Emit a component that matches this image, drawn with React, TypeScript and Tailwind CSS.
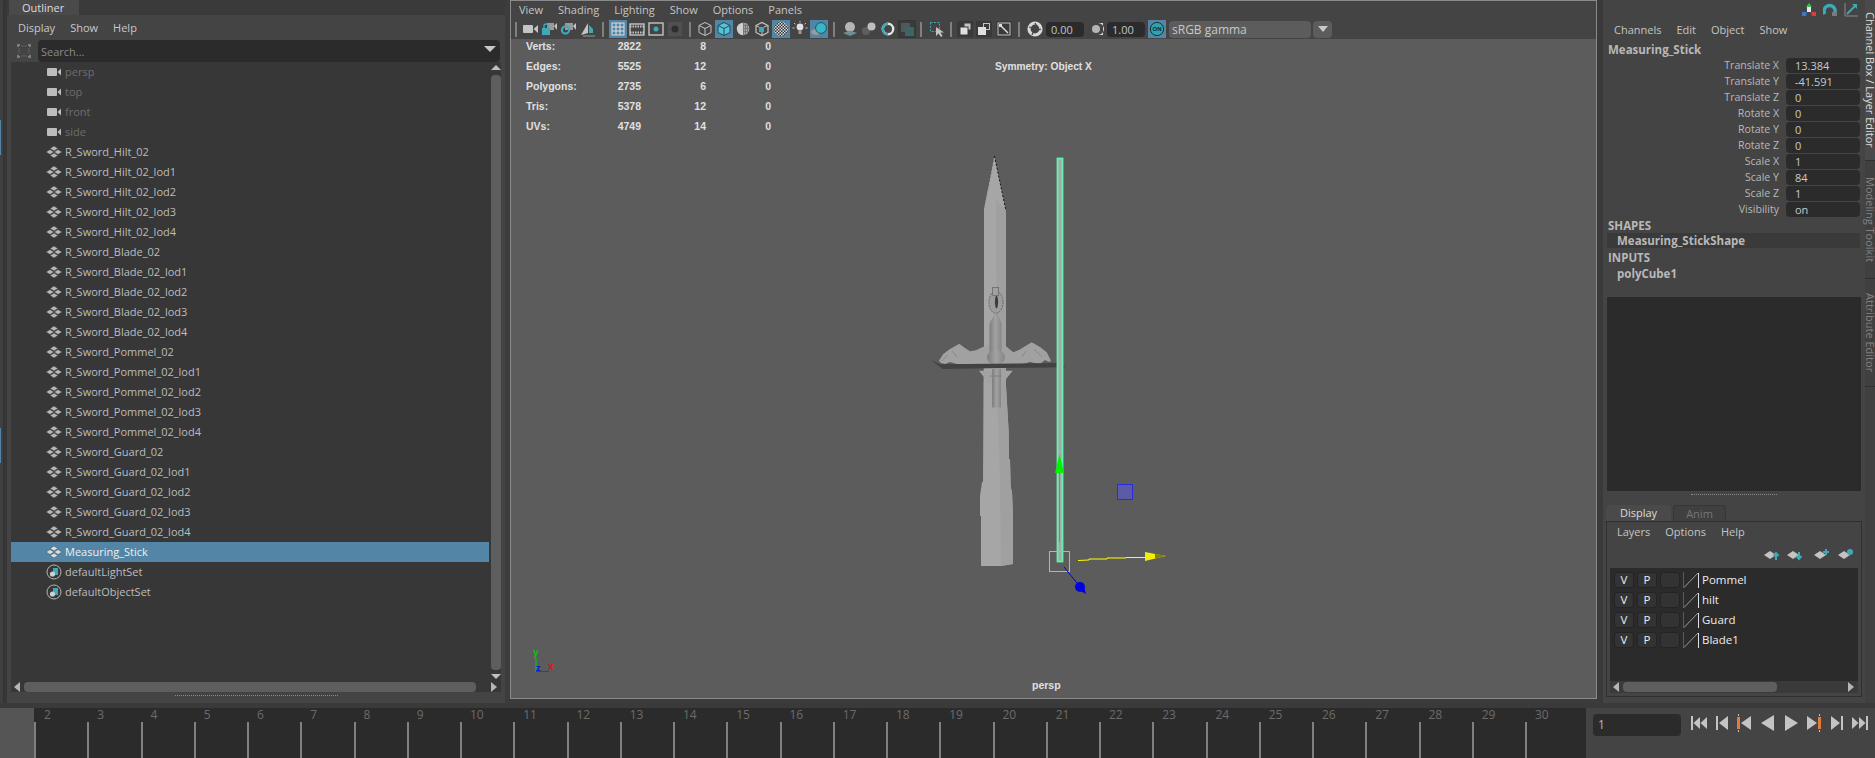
import type { ReactNode } from "react";

const G = "#c4c4c4";
const T = "#3fa9b8";

const outlinerRows = [
  ...["persp", "top", "front", "side"].map((name) => ({ name, kind: "cam" })),
  ...["Hilt", "Blade", "Pommel", "Guard"].flatMap((part) =>
    ["", "_lod1", "_lod2", "_lod3", "_lod4"].map((lod) => ({
      name: `R_Sword_${part}_02${lod}`,
      kind: "xform",
    }))
  ),
  { name: "Measuring_Stick", kind: "selected" },
  { name: "defaultLightSet", kind: "set" },
  { name: "defaultObjectSet", kind: "set" },
];

const channels = [
  ["Translate X", "13.384"],
  ["Translate Y", "-41.591"],
  ["Translate Z", "0"],
  ["Rotate X", "0"],
  ["Rotate Y", "0"],
  ["Rotate Z", "0"],
  ["Scale X", "1"],
  ["Scale Y", "84"],
  ["Scale Z", "1"],
  ["Visibility", "on"],
];

const hud = [
  ["Verts:", "2822", "8", "0"],
  ["Edges:", "5525", "12", "0"],
  ["Polygons:", "2735", "6", "0"],
  ["Tris:", "5378", "12", "0"],
  ["UVs:", "4749", "14", "0"],
];

const frames = Array.from({ length: 29 }, (_, i) => i + 2);

function Ico({ children, on }: { children?: ReactNode; on?: boolean }) {
  return (
    <div className={`w-[18px] h-[18px] flex-none ${on ? "bg-[#5285a6]" : ""}`}>
      <svg width="18" height="18" viewBox="0 0 18 18">
        {children}
      </svg>
    </div>
  );
}

function Sep({ className = "" }: { className?: string }) {
  return <div className={`w-[2px] h-[15px] flex-none bg-[#808080] ${className}`} />;
}

function CamIcon() {
  return (
    <svg width="16" height="12" viewBox="0 0 16 12" className="flex-none">
      <rect x="1" y="2" width="10" height="8" rx="1" fill="#bdbdbd" />
      <polygon points="11.5,6 15,2.5 15,9.5" fill="#bdbdbd" />
    </svg>
  );
}

function XformIcon({ bright }: { bright?: boolean }) {
  const c = bright ? "#dcdcdc" : "#b8b8b8";
  const line = bright ? "#2f4f66" : "#373737";
  return (
    <svg width="16" height="12" viewBox="0 0 16 12" className="flex-none">
      <g fill={c} stroke={line} strokeWidth="0.5">
        <polygon points="8,0 12,2.5 8,5 4,2.5" />
        <polygon points="8,7 12,9.5 8,12 4,9.5" />
        <polygon points="4,3.5 8,6 4,8.5 0,6" />
        <polygon points="12,3.5 16,6 12,8.5 8,6" />
      </g>
    </svg>
  );
}

function SetIcon() {
  return (
    <svg width="16" height="16" viewBox="0 0 16 16" className="flex-none">
      <circle cx="8" cy="8" r="7" fill="none" stroke="#b5b5b5" strokeWidth="1" />
      <rect x="7" y="4" width="5" height="7" fill={T} />
      <circle cx="6.5" cy="10" r="2.6" fill="#cfcfcf" />
    </svg>
  );
}

function HScroll({ thumb, className }: { thumb: string; className: string }) {
  return (
    <div className={`flex items-center ${className}`}>
      <svg width="6" height="10" viewBox="0 0 6 10" className="flex-none ml-[3px]">
        <polygon points="0,5 6,0 6,10" fill="#b5b5b5" />
      </svg>
      <div className={`h-[10px] rounded-[4px] bg-[#5e5e5e] flex-none ml-[4px] ${thumb}`} />
      <svg width="6" height="10" viewBox="0 0 6 10" className="flex-none ml-auto mr-[4px]">
        <polygon points="6,5 0,0 0,10" fill="#b5b5b5" />
      </svg>
    </div>
  );
}

function Outliner() {
  return (
    <div className="w-[505px] flex-none flex">
      <div className="w-[4px] flex-none bg-[#3f3f3f] border-r border-[#333]">
        <div className="w-[1px] h-[35px] mt-[120px] bg-[#5285a6]" />
        <div className="w-[1px] h-[35px] mt-[273px] bg-[#5285a6]" />
      </div>
      <div className="w-[3px] flex-none bg-[#363636]" />
      <div className="flex-1 flex flex-col">
        <div className="h-[15px] bg-[#3a3a3a] pl-[2px] flex-none">
          <div className="w-[70px] h-[15px] bg-[#4a4a4a] text-[#dcdcdc] text-[11px] leading-[15px] pl-[13px]">
            Outliner
          </div>
        </div>
        <div className="h-[25px] flex-none bg-[#444] flex items-center gap-[15px] pl-[11px] pt-[1px] text-[11px] text-[#c8c8c8]">
          <span>Display</span>
          <span>Show</span>
          <span>Help</span>
        </div>
        <div className="h-[22px] flex-none bg-[#444] flex items-center">
          <svg width="16" height="16" viewBox="0 0 16 16" className="ml-[9px] flex-none">
            <path d="M2 4V2h2M12 2h2v2M14 12v2h-2M4 14H2v-2" fill="none" stroke="#7d7d7d" strokeWidth="2" />
            <path d="M3 5v6M13 5v6M5 3h6M5 13h6" stroke="#5e5e5e" strokeWidth="1" />
          </svg>
          <div className="ml-[6px] w-[462px] h-[22px] bg-[#2b2b2b] rounded-sm flex items-center pl-[3px] pr-[4px] pt-[2px] text-[11px] text-[#8a8a8a]">
            Search...
            <svg width="12" height="6" viewBox="0 0 12 6" className="ml-auto mb-[6px]">
              <polygon points="0,0 12,0 6,6" fill="#c8c8c8" />
            </svg>
          </div>
        </div>
        <div className="flex-none h-[630px] ml-[4px] mr-[4px] bg-[#373737] flex flex-col">
          <div className="flex flex-1 min-h-0">
            <div className="flex-1 min-w-0">
              {outlinerRows.map((r) => (
                <div
                  key={r.name}
                  className={`h-[20px] flex items-center pl-[35px] text-[11px] ${
                    r.kind === "cam"
                      ? "text-[#6e6e6e]"
                      : r.kind === "selected"
                        ? "bg-[#5285a6] text-[#f0f0f0]"
                        : "text-[#bdbdbd]"
                  }`}
                >
                  {r.kind === "cam" && <CamIcon />}
                  {(r.kind === "xform" || r.kind === "selected") && <XformIcon bright={r.kind === "selected"} />}
                  {r.kind === "set" && <SetIcon />}
                  <span className="ml-[3px]">{r.name}</span>
                </div>
              ))}
            </div>
            <div className="w-[12px] flex-none pl-[2px] flex flex-col items-center pt-[3px] pb-[3px]">
              <svg width="10" height="5" viewBox="0 0 10 5" className="flex-none">
                <polygon points="5,0 10,5 0,5" fill="#c0c0c0" />
              </svg>
              <div className="w-[10px] flex-1 rounded-[4px] bg-[#5e5e5e] mt-[5px] mb-[4px]" />
              <svg width="10" height="5" viewBox="0 0 10 5" className="flex-none">
                <polygon points="0,0 10,0 5,5" fill="#c0c0c0" />
              </svg>
            </div>
          </div>
          <HScroll thumb="w-[452px]" className="h-[10px] flex-none" />
        </div>
        <div className="flex-1 bg-[#444] flex justify-center pt-[3px]">
          <div className="w-[163px] h-[1px] border-t border-dotted border-[#8a8a8a]" />
        </div>
      </div>
    </div>
  );
}

function Toolbar() {
  return (
    <div className="h-[20px] flex-none bg-[#444] flex items-center pl-[4px]">
      <Sep />
      <div className="flex gap-px ml-[5px]">
        <Ico><rect x="1" y="5" width="10" height="8" rx="1" fill={G} /><polygon points="11.5,9 16,5 16,13" fill={G} /></Ico>
        <Ico><rect x="6" y="3" width="7" height="7" fill="#9a9a9a" /><polygon points="13,6 16,3 16,10" fill={G} /><rect x="1" y="8" width="8" height="7" fill={T} /><path d="M3 8V6a2 2 0 0 1 4 0v2" fill="none" stroke={T} strokeWidth="1.4" /></Ico>
        <Ico><rect x="5" y="3" width="8" height="7" fill="#9a9a9a" /><polygon points="13,6 16,3 16,10" fill={G} /><circle cx="5.5" cy="10" r="3.6" fill="none" stroke={T} strokeWidth="2.2" /></Ico>
        <Ico><polygon points="9,3 9,13 2,15" fill={G} /><polygon points="10,5 14,9 14,13 10,13" fill={T} /><path d="M4 16h12" stroke="#9a9a9a" /></Ico>
      </div>
      <Sep className="ml-[5px]" />
      <div className="flex gap-px ml-[5px]">
        <Ico on><rect x="3" y="3" width="12" height="12" fill="none" stroke="#e0e0e0" /><path d="M7 3v12M11 3v12M3 7h12M3 11h12" stroke="#e0e0e0" /></Ico>
        <Ico><rect x="2" y="4" width="14" height="11" fill="none" stroke={G} strokeWidth="1.4" /><path d="M2 6.5h14M2 12.5h14" stroke={G} strokeDasharray="1.5 1" strokeWidth="2" /></Ico>
        <Ico><rect x="2" y="3" width="14" height="12" fill="none" stroke={G} strokeWidth="1.4" /><circle cx="9" cy="9" r="2.5" fill={T} /></Ico>
        <Ico><rect x="2" y="2" width="14" height="14" fill="#505050" /><circle cx="9" cy="9" r="3.5" fill="#2e2e2e" /></Ico>
      </div>
      <Sep className="ml-[5px]" />
      <div className="flex gap-px ml-[5px]">
        <Ico><path d="M3 5.5L9 2.5l6 3v7l-6 3-6-3zM3 5.5l6 3 6-3M9 8.5v7" fill="none" stroke={G} strokeWidth="1" /></Ico>
        <Ico on><polygon points="3,5.5 9,2.5 15,5.5 15,12.5 9,15.5 3,12.5" fill="#55c4d4" stroke="#1f4a55" /><path d="M3 5.5l6 3 6-3M9 8.5v7" fill="none" stroke="#1f4a55" /></Ico>
        <Ico><circle cx="9" cy="9" r="6.2" fill="#d0d0d0" /><path d="M9 2.8a6.2 6.2 0 0 1 0 12.4z" fill="#777" /><path d="M10 4h4M10 7h5M10 10h5M10 13h3" stroke="#d0d0d0" strokeDasharray="1 1" /></Ico>
        <Ico><path d="M3 5.5L9 2.5l6 3v7l-6 3-6-3z" fill="none" stroke={G} strokeWidth="1.2" /><polygon points="6,7 11,7 11,12 6,12" fill={T} /><path d="M3 5.5l3 1.5M15 5.5l-4 1.5M9 15.5V12" stroke={G} /></Ico>
        <Ico on><defs><pattern id="chk" width="3" height="3" patternUnits="userSpaceOnUse"><rect width="3" height="3" fill="#333" /><rect width="1.5" height="1.5" fill="#ddd" /><rect x="1.5" y="1.5" width="1.5" height="1.5" fill="#ddd" /></pattern></defs><circle cx="9" cy="9" r="7" fill="url(#chk)" /></Ico>
        <Ico><circle cx="9" cy="7" r="3.4" fill="#e0e0e0" /><rect x="7.5" y="11" width="3" height="3" fill="#9a9a9a" /><path d="M9 1v1.4M3 3l1.4 1.2M15 3l-1.4 1.2M1.5 8h2M14.5 8h2" stroke={G} /></Ico>
        <Ico on><ellipse cx="6" cy="12" rx="5" ry="3" fill="#9a9a9a" /><circle cx="11" cy="8" r="5.4" fill="#35b8c6" stroke="#123" strokeWidth="0.6" /></Ico>
      </div>
      <Sep className="ml-[5px]" />
      <div className="flex gap-px ml-[6px]">
        <Ico><circle cx="9" cy="7" r="5" fill="#b5b5b5" /><path d="M2 13l7-2.5 7 2.5-7 3z" fill="#6f8f94" /></Ico>
        <Ico><circle cx="6" cy="11" r="4" fill="#5e5e5e" /><circle cx="11.5" cy="6.5" r="4" fill="#c0c0c0" /></Ico>
        <Ico><circle cx="9" cy="9" r="5.2" fill="none" stroke="#e4e4e4" strokeWidth="2.4" /><path d="M9 3.8a5.2 5.2 0 0 0 0 10.4" fill="none" stroke={T} strokeWidth="2.4" /></Ico>
        <Ico><rect x="0" y="0" width="18" height="18" fill="#3a3a3a" stroke="#333" /><rect x="3" y="3" width="9" height="9" fill="#4e5a5a" /><rect x="7" y="7" width="9" height="9" fill="#3f6468" /></Ico>
      </div>
      <Sep className="ml-[4px]" />
      <div className="ml-[6px]">
        <Ico><rect x="2.5" y="2.5" width="9" height="9" fill="none" stroke={T} strokeDasharray="2 1.4" /><polygon points="8,7 8,16 10.5,13.5 13,17 14.5,16 12.5,12.6 16,12.6" fill={G} /></Ico>
      </div>
      <Sep className="ml-[4px]" />
      <div className="flex gap-px ml-[5px]">
        <Ico><rect x="0" y="1" width="16" height="16" fill="#3a3a3a" /><rect x="7" y="3" width="7" height="7" fill={G} stroke="#3a3a3a" /><rect x="3" y="7" width="8" height="8" fill="#e0e0e0" stroke="#3a3a3a" /></Ico>
        <Ico><rect x="0" y="1" width="16" height="16" fill="#3a3a3a" /><rect x="7.5" y="3.5" width="6" height="6" fill="none" stroke={G} /><rect x="2" y="7" width="8" height="8" fill="#e0e0e0" /></Ico>
        <Ico><rect x="1" y="1" width="16" height="16" fill="#3a3a3a" /><rect x="3" y="3" width="12" height="12" fill="none" stroke={G} /><path d="M5 5l8 8" stroke="#e0e0e0" strokeWidth="1.4" /><rect x="4" y="4" width="3" height="3" fill="#e0e0e0" /></Ico>
      </div>
      <Sep className="ml-[5px]" />
      <div className="ml-[6px]">
        <Ico><circle cx="9" cy="9" r="6" fill="none" stroke="#d8d8d8" strokeWidth="3.2" /><path d="M9 3l3 5M15 9l-5 2M6 15l2-5M3 7l5 1" stroke="#444" strokeWidth="1.2" /></Ico>
      </div>
      <div className="ml-[2px] w-[38px] h-[15px] bg-[#2b2b2b] rounded-sm text-[11px] leading-[15px] pl-[5px] text-[#b9c6d2]">0.00</div>
      <div className="ml-[3px]">
        <Ico><circle cx="9" cy="9" r="4" fill="#b5b5b5" /><path d="M11 3h5v12h-5a6 6 0 0 0 0-12z" fill="#e0e0e0" /></Ico>
      </div>
      <div className="ml-[2px] w-[38px] h-[15px] bg-[#2b2b2b] rounded-sm text-[11px] leading-[15px] pl-[5px] text-[#c4c4c4]">1.00</div>
      <div className="ml-[3px] w-[18px] h-[18px] bg-[#5285a6] flex items-center justify-center">
        <svg width="16" height="16" viewBox="0 0 16 16">
          <circle cx="8" cy="8" r="6.6" fill="#2fa2ae" stroke="#1c2c30" strokeWidth="1" />
          <text x="8" y="10" textAnchor="middle" fontSize="6" fontWeight="700" fill="#14282c" fontFamily="'Liberation Sans',sans-serif">ON</text>
        </svg>
      </div>
      <div className="ml-[3px] w-[142px] h-[17px] bg-[#5c5c5c] rounded-sm text-[12px] leading-[18px] pl-[3px] text-[#c8c8c8]">sRGB gamma</div>
      <div className="ml-[2px] w-[19px] h-[17px] bg-[#5c5c5c] rounded-sm flex items-center justify-center">
        <svg width="10" height="6" viewBox="0 0 10 6">
          <polygon points="0,0 10,0 5,6" fill="#c8c8c8" />
        </svg>
      </div>
    </div>
  );
}

function Viewport() {
  return (
    <div className="w-[1087px] h-[699px] flex-none flex flex-col border border-[#8a8a8a]">
      <div className="h-[18px] flex-none bg-[#444] flex items-center gap-[15px] pl-[8px] text-[11px] text-[#c4c4c4]">
        <span>View</span>
        <span>Shading</span>
        <span>Lighting</span>
        <span>Show</span>
        <span>Options</span>
        <span>Panels</span>
      </div>
      <Toolbar />
      <div className="relative flex-1 bg-[#5c5c5c] overflow-hidden">
        <svg className="absolute inset-0" width="1085" height="659" viewBox="511 40 1085 659">
          <defs>
            <linearGradient id="hilt" x1="0" x2="1" y1="0" y2="0">
              <stop offset="0" stopColor="#7e7e7e" />
              <stop offset="0.5" stopColor="#a2a2a2" />
              <stop offset="1" stopColor="#868686" />
            </linearGradient>
          </defs>
          <polygon
            points="994.3,157 984,210 984,345 983.5,386 983,483 982,483 980,497 980,517 981,517 981,567 1001,567 1013,565 1013,517 1012,493 1010.7,488 1010,460 1009,460 1008.7,433 1006,387 1006,212"
            fill="#a6a6a6"
          />
          <polygon points="996,200 1006,212 1006,387 1008.7,433 1009,460 1010,460 1010.7,488 1012,493 1013,517 1013,565 1001,567 1000,480 997,387" fill="#a0a0a0" />
          <path d="M994.5 157L1006 212" stroke="#111" strokeWidth="1" strokeDasharray="2 2" fill="none" />
          <path d="M994 158L988 190" stroke="#333" strokeWidth="0.6" strokeDasharray="1 3" fill="none" />
          <polygon
            points="939,361.7 943.3,355 950,350 959.3,344.7 965,349 970,352.3 976,351.3 989.3,345 1003.3,345 1013.3,353.3 1019.3,350.7 1031.7,343.3 1040,348 1046.7,353.3 1051,361.7 1049,363 1045,361 1040,365 1030,363 1020,366 960,366 950,363 945,365 941,364"
            fill="#a1a1a1"
          />
          <path d="M942 362l6-6M952 352l5 6M1034 350l8 8M1026 352l-4 6" stroke="#8a8a8a" strokeWidth="1" />
          <polygon points="979,371.7 990.7,386.7 1000.7,386.7 1012.7,371.7" fill="#a3a3a3" />
          <rect x="989.5" y="325" width="12" height="29" fill="url(#hilt)" />
          <polygon points="990.7,322 996,313.3 1000.7,322 1001.5,326 989.5,326" fill="url(#hilt)" />
          <ellipse cx="996" cy="303.3" rx="7" ry="11" fill="#9c9c9c" stroke="#595959" strokeWidth="0.8" strokeDasharray="2 1" />
          <ellipse cx="996.5" cy="303" rx="1.6" ry="6.5" fill="#3c3c3c" />
          <rect x="992.7" y="288.5" width="6" height="8" fill="#a0a0a0" stroke="#595959" strokeWidth="0.6" />
          <ellipse cx="996" cy="358.5" rx="9" ry="7.5" fill="url(#hilt)" />
          <rect x="992" y="370" width="9" height="38.5" fill="url(#hilt)" />
          <path d="M990 377h12" stroke="#808080" strokeWidth="1" />
          <polygon points="931,361 942.7,370 1026.7,368.7 1065.7,368.3 1056.7,364 940,365.3" fill="#424242" />

          <rect x="1057.5" y="159.5" width="5" height="403" fill="#a8a8a8" stroke="#5cf5b0" strokeWidth="1.8" />
          <path d="M1059.5 473V543" stroke="#00e000" strokeWidth="1" />
          <polygon points="1059.5,455 1055,474 1064,474" fill="#00f000" />
          <rect x="1049.5" y="552.5" width="20" height="20" fill="none" stroke="#5fd0ff" strokeWidth="1" />
          <path d="M1078 561.5l11-.5 0-1 18 0 0-1 19 0 0-.5 19 0" stroke="#ffff00" strokeWidth="1" fill="none" />
          <polygon points="1145,553 1166,557 1145,562" fill="#f0f000" />
          <polygon points="1155,554.8 1166,557 1155,559.5" fill="#7d7d10" />
          <path d="M1064 568L1077 584" stroke="#0000e0" strokeWidth="1" />
          <circle cx="1080" cy="588" r="5" fill="#0000e0" />
          <polygon points="1083,584 1086,595 1077,590" fill="#0000e0" />
          <rect x="1117.5" y="485.5" width="15" height="15" fill="#5c5ca6" stroke="#2a2ae0" strokeWidth="1" />

          <path d="M536 659V673" stroke="#00d000" strokeWidth="1" />
          <path d="M536 672.5H549" stroke="#e00000" strokeWidth="1" />
          <text x="533" y="657" fontSize="10" fontWeight="700" fill="#10c010" fontFamily="'Liberation Sans',sans-serif">y</text>
          <text x="548" y="671" fontSize="10" fontWeight="700" fill="#e01010" fontFamily="'Liberation Sans',sans-serif">x</text>
          <text x="536" y="672" fontSize="9" fontWeight="700" fill="#1010e0" fontFamily="'Liberation Sans',sans-serif">z</text>
        </svg>
        <div className="absolute left-[15px] top-[-2px] w-[247px] font-['Liberation_Sans',sans-serif] font-bold text-[10.5px] text-[#e0e0e0]">
          {hud.map(([label, a, b, c]) => (
            <div key={label} className="h-[20px] flex items-center">
              <span className="w-[60px]">{label}</span>
              <span className="w-[55px] text-right">{a}</span>
              <span className="w-[65px] text-right">{b}</span>
              <span className="w-[65px] text-right">{c}</span>
            </div>
          ))}
        </div>
        <div className="absolute left-[484px] top-[20px] font-['Liberation_Sans',sans-serif] font-bold text-[10.2px] text-[#e0e0e0]">
          Symmetry: Object X
        </div>
        <div className="absolute left-[521px] top-[639px] font-['Liberation_Sans',sans-serif] font-bold text-[10.5px] text-[#e0e0e0]">
          persp
        </div>
      </div>
    </div>
  );
}

function LayerIcon({ children }: { children: ReactNode }) {
  return (
    <svg width="16" height="12" viewBox="0 0 16 12" className="flex-none">
      <polygon points="0,6 6,2 12,6 6,10" fill={G} />
      {children}
    </svg>
  );
}

function LayerEditor() {
  return (
    <div className="flex-1 flex flex-col ml-[3px] mr-[3px] min-h-0">
      <div className="h-[16px] flex-none flex items-end text-[11px] gap-[2px]">
        <div className="w-[65px] h-[16px] bg-[#4a4a4a] rounded-t-sm text-center text-[#dcdcdc] leading-[16px]">Display</div>
        <div className="w-[53px] h-[16px] bg-[#404040] border border-b-0 border-[#363636] rounded-t-sm text-center text-[#777] leading-[15px]">Anim</div>
      </div>
      <div className="h-[176px] flex-none border border-[#303030] flex flex-col bg-[#444]">
        <div className="h-[22px] flex-none flex items-center gap-[15px] pl-[10px] pb-[2px] text-[11px] text-[#c4c4c4]">
          <span>Layers</span>
          <span>Options</span>
          <span>Help</span>
        </div>
        <div className="h-[24px] flex-none flex items-center pl-[157px] pb-[2px]">
          <LayerIcon><path d="M12 11V5M9.5 7L12 4l2.5 3" stroke={T} strokeWidth="2" fill="none" /></LayerIcon>
          <div className="ml-[7px]">
            <LayerIcon><path d="M12 3v6M9.5 7l2.5 3 2.5-3" stroke={T} strokeWidth="2" fill="none" /></LayerIcon>
          </div>
          <div className="ml-[11px]">
            <LayerIcon><path d="M12 0v6M9 3h6" stroke={T} strokeWidth="2" fill="none" /></LayerIcon>
          </div>
          <div className="ml-[8px]">
            <LayerIcon><circle cx="12" cy="3" r="3" fill={T} /></LayerIcon>
          </div>
        </div>
        <div className="flex-1 mx-[3px] mb-[3px] flex flex-col min-h-0">
          <div className="flex-1 bg-[#2b2b2b] pt-[2px] pl-[4px]">
            {["Pommel", "hilt", "Guard", "Blade1"].map((name) => (
              <div key={name} className="h-[20px] flex items-center gap-[3px] text-[11.5px] text-[#ececec]">
                <div className="w-[20px] h-[16px] rounded-[3px] bg-[#333] border border-[#242424] text-center leading-[14px]">V</div>
                <div className="w-[20px] h-[16px] rounded-[3px] bg-[#333] border border-[#242424] text-center leading-[14px]">P</div>
                <div className="w-[20px] h-[16px] rounded-[3px] bg-[#333] border border-[#242424]" />
                <svg width="16" height="16" viewBox="0 0 16 16" className="flex-none">
                  <path d="M0.5 16V0" stroke="#5a5a5a" fill="none" />
                  <path d="M1 15.5L15 1" stroke="#9a9a9a" fill="none" />
                  <path d="M15.5 1V16" stroke="#e0e0e0" />
                </svg>
                <span>{name}</span>
              </div>
            ))}
          </div>
          <HScroll thumb="w-[154px]" className="h-[12px] flex-none bg-[#3a3a3a]" />
        </div>
      </div>
    </div>
  );
}

function ChannelBox() {
  return (
    <div className="w-[272px] flex-none flex h-[703px]">
      <div className="w-[262px] flex-none flex flex-col bg-[#444]">
        <div className="h-[20px] flex-none flex items-center justify-end pr-[7px] gap-[7px]">
          <svg width="14" height="14" viewBox="0 0 14 14">
            <polygon points="7,0 10,4 4,4" fill="#3dbb55" />
            <rect x="5" y="4" width="4" height="5" fill="#e8e8e8" />
            <polygon points="0,9 5,9 4,13 0,13" fill="#3a78c8" />
            <polygon points="9,9 14,9 14,13 10,13" fill="#d84040" />
          </svg>
          <svg width="14" height="14" viewBox="0 0 14 14">
            <path d="M2 11A5.5 5.5 0 1 1 12 9" fill="none" stroke={T} strokeWidth="3.4" />
            <rect x="9" y="9" width="5" height="4" fill="#7a7a7a" />
          </svg>
          <svg width="14" height="14" viewBox="0 0 14 14">
            <path d="M1 0V13H14" fill="none" stroke="#8a8a8a" />
            <path d="M3 11L12 2" stroke={T} strokeWidth="2" />
            <polygon points="8,1 13,1 13,6" fill={T} />
          </svg>
        </div>
        <div className="h-[20px] flex-none flex items-center gap-[15px] pl-[11px] text-[11px] text-[#c4c4c4]">
          <span>Channels</span>
          <span>Edit</span>
          <span>Object</span>
          <span>Show</span>
        </div>
        <div className="h-[17px] flex-none pl-[5px] text-[11.5px] font-bold leading-[20px] text-[#b8b8b8]">Measuring_Stick</div>
        {channels.map(([label, value]) => (
          <div key={label} className="h-[16px] flex-none flex items-center text-[11px]">
            <span className="w-[176px] pt-[2px] text-right text-[#b8b8b8] text-[10.6px]">{label}</span>
            <div className="ml-[7px] w-[74px] h-[15px] bg-[#2b2b2b] rounded-sm pl-[9px] leading-[15px] text-[#c4ccd4]">{value}</div>
          </div>
        ))}
        <div className="h-[16px] flex-none pl-[5px] text-[11.5px] font-bold leading-[17px] text-[#b8b8b8]">SHAPES</div>
        <div className="h-[15px] flex-none ml-[4px] mr-[5px] bg-[#3a3a3a] pl-[10px] text-[11.5px] font-bold leading-[15px] text-[#b8b8b8]">Measuring_StickShape</div>
        <div className="h-[17px] flex-none pl-[5px] text-[11.5px] font-bold leading-[19px] text-[#b8b8b8]">INPUTS</div>
        <div className="h-[16px] flex-none pl-[14px] text-[11.5px] font-bold leading-[17px] text-[#b8b8b8]">polyCube1</div>
        <div className="h-[16px] flex-none" />
        <div className="h-[194px] flex-none ml-[4px] mr-[4px] bg-[#2b2b2b]" />
        <div className="h-[14px] flex-none flex justify-center pt-[3px]">
          <div className="w-[86px] h-[1px] border-t border-dotted border-[#8a8a8a]" />
        </div>
        <LayerEditor />
      </div>
      <div className="w-[10px] flex-none bg-[#404040] flex flex-col text-[11px]">
        <div className="h-[160px] flex-none bg-[#4a4a4a] pt-[12px] [writing-mode:vertical-rl] text-[#dcdcdc] leading-[10px]">Channel Box / Layer Editor</div>
        <div className="h-[118px] flex-none border-t border-[#303030] pt-[16px] [writing-mode:vertical-rl] text-[#808080] leading-[10px]">Modeling Toolkit</div>
        <div className="h-[109px] flex-none border-t border-b border-[#303030] pt-[14px] [writing-mode:vertical-rl] text-[#808080] leading-[10px]">Attribute Editor</div>
      </div>
    </div>
  );
}

function Transport() {
  return (
    <div className="flex items-center gap-[9px] ml-[10px] mb-[6px]">
      <svg width="16" height="14" viewBox="0 0 16 14"><rect x="0" y="0" width="2" height="14" fill={G} /><polygon points="2.5,7 9,1 9,13" fill={G} /><polygon points="9.5,7 16,1 16,13" fill={G} /></svg>
      <svg width="12" height="14" viewBox="0 0 12 14"><rect x="0" y="0" width="2" height="14" fill={G} /><polygon points="3,7 12,0 12,14" fill={G} /></svg>
      <svg width="14" height="18" viewBox="0 0 14 18"><rect x="0" y="3" width="3" height="12" fill="#e07b39" /><path d="M1.5 0v2M1.5 16v2" stroke={G} /><polygon points="4,9 14,2 14,16" fill={G} /></svg>
      <svg width="13" height="16" viewBox="0 0 13 16" className="ml-px"><polygon points="0,8 13,0 13,16" fill={G} /></svg>
      <svg width="13" height="16" viewBox="0 0 13 16" className="ml-[2px]"><polygon points="13,8 0,0 0,16" fill={G} /></svg>
      <svg width="15" height="18" viewBox="0 0 15 18"><polygon points="10,9 0,2 0,16" fill={G} /><rect x="11" y="3" width="3" height="12" fill="#e07b39" /><path d="M12.5 0v2M12.5 16v2" stroke={G} /></svg>
      <svg width="12" height="14" viewBox="0 0 12 14"><rect x="10" y="0" width="2" height="14" fill={G} /><polygon points="9,7 0,0 0,14" fill={G} /></svg>
      <svg width="16" height="14" viewBox="0 0 16 14"><rect x="14" y="0" width="2" height="14" fill={G} /><polygon points="13.5,7 7,1 7,13" fill={G} /><polygon points="6.5,7 0,1 0,13" fill={G} /></svg>
    </div>
  );
}

export default function App() {
  return (
    <div className="w-[1875px] h-[758px] overflow-hidden flex flex-col bg-[#444] font-['Open_Sans',sans-serif]">
      <div className="h-[703px] flex-none flex">
        <Outliner />
        <div className="w-[5px] flex-none bg-[#3c3c3c]" />
        <div className="flex-none bg-[#3c3c3c]">
          <Viewport />
        </div>
        <div className="w-[6px] flex-none bg-[#3a3a3a]" />
        <ChannelBox />
      </div>
      <div className="h-[5px] flex-none bg-[#3a3a3a]" />
      <div className="h-[50px] flex-none flex">
        <div className="w-[34px] flex-none bg-[#555]" />
        <div className="w-[1552px] flex-none bg-[#2b2b2b] flex">
          {frames.map((f) => (
            <div key={f} className="w-[53.25px] flex-none flex flex-col">
              <div className="h-[14px] pl-[10px] text-[12px] leading-[14px] text-[#6c6c6c]">{f}</div>
              <div className="w-[2px] flex-1 bg-[#808080]" />
            </div>
          ))}
        </div>
        <div className="flex-1 flex items-start pt-[6px] pl-[7px]">
          <div className="w-[88px] h-[22px] bg-[#2b2b2b] rounded-sm text-[12px] leading-[22px] pl-[5px] text-[#b0b8c8]">1</div>
          <Transport />
        </div>
      </div>
    </div>
  );
}
